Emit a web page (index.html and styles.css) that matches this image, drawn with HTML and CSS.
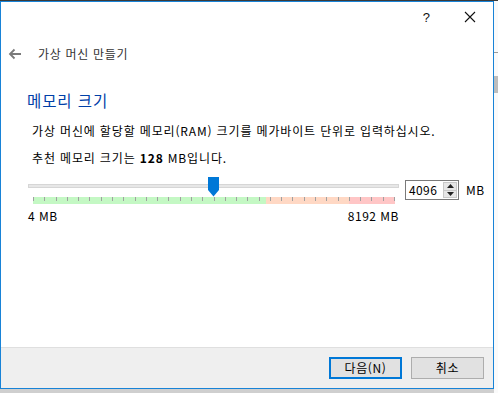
FILE: index.html
```html
<!DOCTYPE html>
<html lang="ko">
<head>
<meta charset="utf-8">
<link rel="stylesheet" href="styles.css">
</head>
<body>
<div class="desk">
  <div class="window">
    <div class="titlebar">
      <span class="help">?</span>
      <svg class="close" width="12" height="12" viewBox="0 0 12 12"><path d="M1 1 L11 11 M11 1 L1 11" stroke="#111" stroke-width="1.1" fill="none"/></svg>
    </div>
    <div class="nav">
      <svg class="back" width="14" height="12" viewBox="0 0 14 12"><path d="M13 6 H2 M6.5 1.5 L2 6 L6.5 10.5" stroke="#7a7a7a" stroke-width="1.8" fill="none"/></svg>
      <span class="navtitle">가상 머신 만들기</span>
    </div>
    <div class="content">
      <h1 class="heading">메모리 크기</h1>
      <p class="para p1">가상 머신에 할당할 메모리(RAM) 크기를 메가바이트 단위로 입력하십시오.</p>
      <p class="para p2">추천 메모리 크기는 <b>128</b> MB입니다.</p>
      <div class="sliderrow">
        <div class="slidercol">
          <div class="trackarea">
            <div class="track"></div>
            <svg class="thumb" width="11" height="20" viewBox="0 0 11 20"><path d="M0 0 H11 V13 L5.5 19.5 L0 13 Z" fill="#0078d7"/></svg>
          </div>
          <div class="band">
            <div class="seg green" style="width:64.5%"></div>
            <div class="seg orange" style="width:22.8%"></div>
            <div class="seg pink" style="width:12.7%"></div>
            <div class="ticks">
              <i></i><i></i><i></i><i></i><i></i><i></i><i></i><i></i><i></i><i></i><i></i>
              <i></i><i></i><i></i><i></i><i></i><i></i><i></i><i></i><i></i><i></i><i></i>
              <i></i><i></i><i></i><i></i><i></i><i></i><i></i><i></i><i></i><i></i><i></i>
            </div>
          </div>
          <div class="labels"><span>4 MB</span><span>8192 MB</span></div>
        </div>
        <div class="spin">
          <span class="spinval">4096</span>
          <span class="spinbtns">
            <span class="sb"><svg width="7" height="4" viewBox="0 0 7 4"><path d="M0 4 L3.5 0 L7 4 Z" fill="#222"/></svg></span>
            <span class="sb"><svg width="7" height="4" viewBox="0 0 7 4"><path d="M0 0 L3.5 4 L7 0 Z" fill="#222"/></svg></span>
          </span>
        </div>
        <span class="unit">MB</span>
      </div>
    </div>
    <div class="footer">
      <button class="btn primary">다음(N)</button>
      <button class="btn">취소</button>
    </div>
  </div>
  <div class="side">
    <div class="side-line"></div>
    <div class="side-block"></div>
  </div>
</div>
</body>
</html>
```
FILE: styles.css
```css
* { box-sizing: border-box; }
html, body { margin: 0; padding: 0; }
body {
  width: 498px;
  height: 393px;
  overflow: hidden;
  background: #d4d4d4;
  font-family: "Noto Sans CJK KR", "Noto Sans", sans-serif;
  font-size: 12px;
  color: #000;
}
.desk {
  display: flex;
  align-items: flex-start;
  padding-top: 1px;
  height: 393px;
  background: linear-gradient(#3a3a3a 0 1px, #cfcfcf 1px);
}
.window {
  width: 494px;
  height: 388px;
  border: 1px solid #1883d7;
  background: #fff;
  display: flex;
  flex-direction: column;
  flex: none;
}
.titlebar {
  height: 30px;
  display: flex;
  align-items: center;
  justify-content: flex-end;
  padding-right: 17px;
  gap: 34px;
}
.help {
  font-family: "Liberation Sans", sans-serif;
  font-size: 13px;
  color: #111;
}
.close { display: block; }
.nav {
  height: 43px;
  display: flex;
  align-items: center;
  padding-left: 7px;
}
.back { display: block; }
.navtitle {
  margin-left: 16px;
  color: #333;
  font-size: 12px;
  letter-spacing: 0.7px;
}
.content {
  padding-left: 26px;
  flex: 1;
}
.heading {
  margin: 15px 0 0;
  font-size: 15.5px;
  font-weight: normal;
  line-height: 20px;
  color: #0040a8;
  letter-spacing: 0.9px;
}
.para {
  margin: 0;
  line-height: 18px;
  padding-left: 5px;
  letter-spacing: 0.85px;
}
.p1 { margin-top: 12px; }
.p2 { margin-top: 9px; }
.p2 b { font-weight: bold; }
.sliderrow {
  display: flex;
  align-items: flex-start;
  margin-top: 9px;
  padding-left: 1px;
}
.slidercol {
  width: 371px;
}
.trackarea {
  position: relative;
  height: 21px;
}
.track {
  position: absolute;
  left: 0;
  right: 0;
  top: 8px;
  height: 4px;
  background: #e7e7e7;
  border: 1px solid #d6d6d6;
}
.thumb {
  position: absolute;
  left: 180px;
  top: 1px;
}
.band {
  position: relative;
  display: flex;
  margin: 0 4px 0 5px;
  height: 7px;
}
.seg { height: 7px; }
.green { background: #c4f8c4; }
.orange { background: #ffd8c4; }
.pink { background: #ffc6c6; }
.ticks {
  position: absolute;
  left: 0;
  right: 0;
  top: 0;
  display: flex;
  justify-content: space-between;
}
.ticks i {
  display: block;
  width: 1px;
  height: 4px;
  background: #a0a0a0;
}
.labels {
  display: flex;
  justify-content: space-between;
  margin-top: 5px;
  line-height: 14px;
  font-size: 12px;
  letter-spacing: 0.5px;
}
.spin {
  margin-left: 6px;
  margin-top: 4px;
  width: 54px;
  height: 20px;
  border: 1px solid #7a7a7a;
  display: flex;
  align-items: center;
  justify-content: space-between;
  padding: 0 1px 0 3px;
  background: #fff;
  letter-spacing: 0.4px;
}
.spinval { line-height: 16px; }
.spinbtns {
  display: flex;
  flex-direction: column;
  width: 14px;
  height: 16px;
  border: 1px solid #c8c8c8;
  background: #e6e6e6;
}
.sb {
  flex: 1;
  display: flex;
  align-items: center;
  justify-content: center;
}
.sb + .sb { border-top: 1px solid #c8c8c8; }
.sb svg { display: block; }
.unit {
  margin-left: 7px;
  margin-top: 6px;
  line-height: 16px;
  letter-spacing: 0.5px;
}
.footer {
  height: 41px;
  background: #efefef;
  border-top: 1px solid #dfdfdf;
  display: flex;
  justify-content: flex-end;
  align-items: flex-start;
  padding: 9px 9px 0 0;
  gap: 9px;
}
.btn {
  width: 73px;
  height: 22px;
  font-family: "Noto Sans CJK KR", sans-serif;
  font-size: 12px;
  letter-spacing: 0.6px;
  background: #e1e1e1;
  border: 1px solid #adadad;
  padding: 0;
  color: #000;
  line-height: 18px;
}
.btn.primary {
  border: 2px solid #0078d7;
}
.side {
  flex: 1;
  height: 392px;
  background: #fafafa;
}
.side-line {
  margin-top: 51px;
  height: 1px;
  background: #9a9a9a;
}
.side-block {
  margin-top: 23px;
  height: 17px;
  background: #bdbdbd;
}
```
